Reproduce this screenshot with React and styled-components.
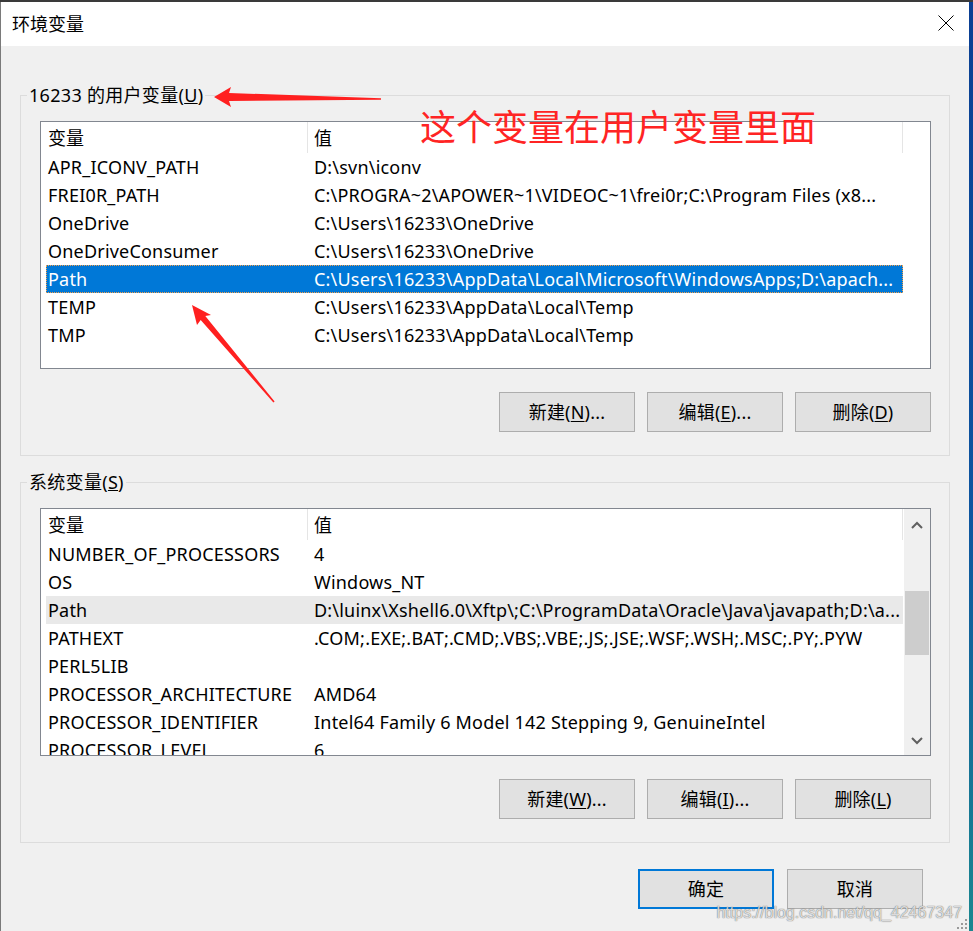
import React from 'react';
import styled, { createGlobalStyle } from 'styled-components';

const FONT = `"Noto Sans", "Noto Sans CJK SC", sans-serif`;

const GlobalStyle = createGlobalStyle`
  html, body { margin: 0; padding: 0; }
  body {
    width: 973px;
    height: 931px;
    overflow: hidden;
    background: linear-gradient(180deg, #3a3a3a 0px, #3a3a3a 2px, #0b3f93 2px, #0d55a0 55%, #1a8790 100%);
    font-family: ${FONT};
  }
`;

const Desktop = styled.div`
  padding-top: 2px;
`;

const Dialog = styled.div`
  position: relative;
  width: 968px;
  height: 929px;
  border-left: 1px solid #7a7a7a;
  background: #f0f0f0;
  display: flex;
  flex-direction: column;
  color: #000;
  font-size: 18px;
`;

const TitleBar = styled.div`
  height: 44px;
  background: #fff;
  display: flex;
  align-items: center;
  justify-content: space-between;
  padding-left: 11px;
`;

const TitleText = styled.div`
  font-size: 18px;
  padding-bottom: 3px;
`;

const CloseButton = styled.div`
  width: 46px;
  height: 44px;
  display: flex;
  align-items: center;
  justify-content: center;
  padding-bottom: 2px;
  box-sizing: border-box;
`;

const Body = styled.div`
  padding: 0 19px;
  display: flex;
  flex-direction: column;
`;

const Group = styled.div`
  margin-top: ${(p) => p.$top}px;
  border: 1px solid #dcdcdc;
  padding: 0 18px 23px 19px;
  display: flex;
  flex-direction: column;
`;

const GroupTitle = styled.div`
  align-self: flex-start;
  margin: -13px 0 0 -13px;
  padding: 0 2px;
  line-height: 24px;
  background: #f0f0f0;
  font-size: 18px;
  letter-spacing: 0.3px;
`;

const ListBox = styled.div`
  margin-top: 14px;
  width: 891px;
  height: 248px;
  box-sizing: border-box;
  border: 1px solid #828790;
  background: #fff;
  display: flex;
  overflow: hidden;
`;

const ListContent = styled.div`
  flex: 1;
  overflow: hidden;
`;

const Header = styled.div`
  display: flex;
  height: 31px;
  padding-left: 5px;
`;

const HeaderCell = styled.div`
  width: ${(p) => p.$w}px;
  box-sizing: border-box;
  padding-left: ${(p) => p.$pl}px;
  border-right: 1px solid #e5e5e5;
  line-height: 31px;
  padding-top: 1px;
  white-space: nowrap;
`;

const Row = styled.div`
  display: flex;
  width: 857px;
  height: 28px;
  margin-left: 5px;
  box-sizing: border-box;
  background: ${(p) => (p.$state === 'selected' ? '#0078d7' : p.$state === 'inactive' ? '#e9e9e9' : 'transparent')};
  color: ${(p) => (p.$state === 'selected' ? '#fff' : '#000')};
  outline: ${(p) => (p.$state === 'selected' ? '1px dotted #f5a04a' : 'none')};
  outline-offset: -1px;
`;

const Cell = styled.div`
  width: ${(p) => p.$w}px;
  box-sizing: border-box;
  padding-left: ${(p) => p.$pl}px;
  line-height: 28px;
  white-space: nowrap;
  overflow: hidden;
  letter-spacing: 0.2px;
`;

const ScrollBar = styled.div`
  width: 26px;
  background: #f0f0f0;
  display: flex;
  flex-direction: column;
`;

const ScrollArrow = styled.div`
  height: ${(p) => p.$h}px;
  display: flex;
  align-items: center;
  justify-content: center;
`;

const ScrollTrack = styled.div`
  flex: 1;
  display: flex;
  flex-direction: column;
  align-items: center;
`;

const Thumb = styled.div`
  margin-top: 50px;
  width: 24px;
  height: 64px;
  background: #cdcdcd;
`;

const ButtonRow = styled.div`
  margin-top: ${(p) => p.$top}px;
  display: flex;
  justify-content: flex-end;
  gap: ${(p) => p.$gap}px;
  padding-right: ${(p) => p.$pr || 0}px;
`;

const Button = styled.button`
  width: 136px;
  height: 40px;
  box-sizing: border-box;
  border: ${(p) => (p.$default ? '2px solid #0078d7' : '1px solid #adadad')};
  background: #e1e1e1;
  font-family: ${FONT};
  font-size: 18px;
  letter-spacing: 0.2px;
  color: #000;
  padding: 0;
  padding-bottom: 2px;
  cursor: default;
  u { text-underline-offset: 2px; }
`;

const Overlay = styled.svg`
  position: absolute;
  left: -1px;
  top: -2px;
  pointer-events: none;
`;

const Annotation = styled.div`
  position: absolute;
  left: 419px;
  top: 103px;
  font-family: "Noto Sans CJK SC", sans-serif;
  font-size: 36px;
  line-height: 40px;
  color: #ff2424;
  white-space: nowrap;
`;

const Watermark = styled.div`
  position: absolute;
  right: 7px;
  bottom: 8px;
  font-family: "Liberation Sans", Arial, sans-serif;
  font-size: 16px;
  line-height: 20px;
  color: rgba(255, 255, 255, 0.75);
  text-shadow: 0 0 1px rgba(90, 90, 90, 0.7), 0 0 1px rgba(90, 90, 90, 0.7);
  white-space: nowrap;
`;

const Grip = styled.svg`
  position: absolute;
  right: 2px;
  bottom: 2px;
`;

const userVars = [
  ['APR_ICONV_PATH', 'D:\\svn\\iconv'],
  ['FREI0R_PATH', 'C:\\PROGRA~2\\APOWER~1\\VIDEOC~1\\frei0r;C:\\Program Files (x8...'],
  ['OneDrive', 'C:\\Users\\16233\\OneDrive'],
  ['OneDriveConsumer', 'C:\\Users\\16233\\OneDrive'],
  ['Path', 'C:\\Users\\16233\\AppData\\Local\\Microsoft\\WindowsApps;D:\\apach...', 'selected'],
  ['TEMP', 'C:\\Users\\16233\\AppData\\Local\\Temp'],
  ['TMP', 'C:\\Users\\16233\\AppData\\Local\\Temp'],
];

const sysVars = [
  ['NUMBER_OF_PROCESSORS', '4'],
  ['OS', 'Windows_NT'],
  ['Path', 'D:\\luinx\\Xshell6.0\\Xftp\\;C:\\ProgramData\\Oracle\\Java\\javapath;D:\\a...', 'inactive'],
  ['PATHEXT', '.COM;.EXE;.BAT;.CMD;.VBS;.VBE;.JS;.JSE;.WSF;.WSH;.MSC;.PY;.PYW'],
  ['PERL5LIB', ''],
  ['PROCESSOR_ARCHITECTURE', 'AMD64'],
  ['PROCESSOR_IDENTIFIER', 'Intel64 Family 6 Model 142 Stepping 9, GenuineIntel'],
  ['PROCESSOR_LEVEL', '6'],
];

function VarList({ rows, scroll }) {
  return (
    <ListBox>
      <ListContent>
        <Header>
          <HeaderCell $w={262} $pl={2}>变量</HeaderCell>
          <HeaderCell $w={595} $pl={6}>值</HeaderCell>
        </Header>
        {rows.map(([name, value, state]) => (
          <Row key={name} $state={state}>
            <Cell $w={262} $pl={2}>{name}</Cell>
            <Cell $w={595} $pl={6}>{value}</Cell>
          </Row>
        ))}
      </ListContent>
      {scroll && (
        <ScrollBar>
          <ScrollArrow $h={32}>
            <svg width="12" height="8" viewBox="0 0 12 8">
              <path d="M1 7 L6 2 L11 7" fill="none" stroke="#606060" strokeWidth="2" />
            </svg>
          </ScrollArrow>
          <ScrollTrack>
            <Thumb />
          </ScrollTrack>
          <ScrollArrow $h={29}>
            <svg width="12" height="8" viewBox="0 0 12 8">
              <path d="M1 1 L6 6 L11 1" fill="none" stroke="#606060" strokeWidth="2" />
            </svg>
          </ScrollArrow>
        </ScrollBar>
      )}
    </ListBox>
  );
}

export default function App() {
  return (
    <>
      <GlobalStyle />
      <Desktop>
        <Dialog>
          <TitleBar>
            <TitleText>环境变量</TitleText>
            <CloseButton>
              <svg width="16" height="16" viewBox="0 0 16 16">
                <path d="M0.5 0.5 L15.5 15.5 M15.5 0.5 L0.5 15.5" stroke="#000" strokeWidth="1" />
              </svg>
            </CloseButton>
          </TitleBar>
          <Body>
            <Group $top={49}>
              <GroupTitle>16233 的用户变量(<u>U</u>)</GroupTitle>
              <VarList rows={userVars} />
              <ButtonRow $top={23} $gap={12}>
                <Button>新建(<u>N</u>)...</Button>
                <Button>编辑(<u>E</u>)...</Button>
                <Button>删除(<u>D</u>)</Button>
              </ButtonRow>
            </Group>
            <Group $top={26}>
              <GroupTitle>系统变量(<u>S</u>)</GroupTitle>
              <VarList rows={sysVars} scroll />
              <ButtonRow $top={23} $gap={12}>
                <Button>新建(<u>W</u>)...</Button>
                <Button>编辑(<u>I</u>)...</Button>
                <Button>删除(<u>L</u>)</Button>
              </ButtonRow>
            </Group>
            <ButtonRow $top={26} $gap={13} $pr={27}>
              <Button $default>确定</Button>
              <Button>取消</Button>
            </ButtonRow>
          </Body>

          <Annotation>这个变量在用户变量里面</Annotation>
          <Overlay width="973" height="931" viewBox="0 0 973 931">
            <polygon
              points="214,97 231,87 229,93 381,98.3 381,99.7 229,101 231,107"
              fill="#ff2020"
            />
            <polygon
              points="192,305 211,315 205.3,316.1 274.6,401.5 273.4,402.5 200.7,319.9 197,325"
              fill="#ff2020"
            />
          </Overlay>
          <Watermark>https://blog.csdn.net/qq_42467347</Watermark>
          <Grip width="10" height="10" viewBox="0 0 10 10">
            <rect x="8" y="0" width="2" height="2" fill="#9a9a9a" />
            <rect x="4" y="4" width="2" height="2" fill="#9a9a9a" />
            <rect x="8" y="4" width="2" height="2" fill="#9a9a9a" />
            <rect x="0" y="8" width="2" height="2" fill="#9a9a9a" />
            <rect x="4" y="8" width="2" height="2" fill="#9a9a9a" />
            <rect x="8" y="8" width="2" height="2" fill="#9a9a9a" />
          </Grip>
        </Dialog>
      </Desktop>
    </>
  );
}
